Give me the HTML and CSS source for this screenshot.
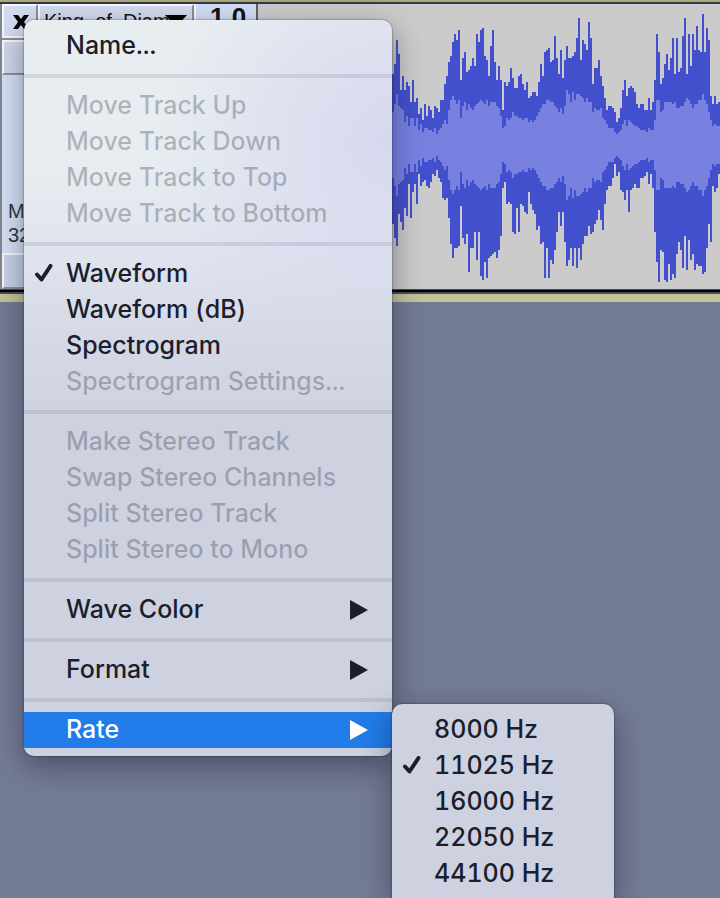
FILE: index.html
```html
<!DOCTYPE html>
<html lang="en">
<head>
<meta charset="utf-8">
<title>Audio track menu</title>
<link rel="stylesheet" href="styles.css">
</head>
<body>
<main class="workspace">
  <section class="track">
    <div class="panel">
      <div class="panel-head">
        <button class="close" aria-label="Close track"><svg width="16" height="14" viewBox="0 0 16 14"><path d="M0 0h5l3 4 3-4h5l-5 7 5 7h-5l-3-4-3 4H0l5-7z"/></svg></button>
        <button class="title"><span>King_of_Diam</span><svg width="22" height="12" viewBox="0 0 22 12"><path d="M0 0h22L11 12z"/></svg></button>
      </div>
      <div class="panel-bar"></div>
      <div class="panel-info"><span>Mono</span><span>32-bit</span></div>
      <div class="panel-foot"></div>
    </div>
    <div class="ruler">1.0</div>
    <svg class="wave" viewBox="0 0 1386 855" preserveAspectRatio="none" aria-hidden="true">
      <path class="peak" id="peak"/>
      <path class="rms" id="rms"/>
    </svg>
  </section>

  <nav class="menu track-menu" aria-label="Track">
    <button class="item">Name...</button>
    <hr>
    <button class="item" disabled>Move Track Up</button>
    <button class="item" disabled>Move Track Down</button>
    <button class="item" disabled>Move Track to Top</button>
    <button class="item" disabled>Move Track to Bottom</button>
    <hr>
    <button class="item"><svg class="check" viewBox="0 0 18 18"><path d="M2 10.500L6.500 15.500 15.500 2"/></svg>Waveform</button>
    <button class="item">Waveform (dB)</button>
    <button class="item">Spectrogram</button>
    <button class="item" disabled>Spectrogram Settings...</button>
    <hr>
    <button class="item" disabled>Make Stereo Track</button>
    <button class="item" disabled>Swap Stereo Channels</button>
    <button class="item" disabled>Split Stereo Track</button>
    <button class="item" disabled>Split Stereo to Mono</button>
    <hr>
    <button class="item">Wave Color<svg class="arrow" viewBox="0 0 18 20"><path d="M0 0l18 10L0 20z"/></svg></button>
    <hr>
    <button class="item">Format<svg class="arrow" viewBox="0 0 18 20"><path d="M0 0l18 10L0 20z"/></svg></button>
    <hr>
    <button class="item active">Rate<svg class="arrow" viewBox="0 0 18 20"><path d="M0 0l18 10L0 20z"/></svg></button>
  </nav>

  <nav class="menu rate-menu" aria-label="Rate">
    <button class="item">8000 Hz</button>
    <button class="item"><svg class="check" viewBox="0 0 18 18"><path d="M2 10.500L6.500 15.500 15.500 2"/></svg>11025 Hz</button>
    <button class="item">16000 Hz</button>
    <button class="item">22050 Hz</button>
    <button class="item">44100 Hz</button>
  </nav>
</main>
<script src="wave.js"></script>
</body>
</html>
```
FILE: styles.css
```css
* { box-sizing: border-box; }
body {
  margin: 0;
  background: #747b95;
  overflow: hidden;
  font-family: Inter, "Liberation Sans", sans-serif;
}
button {
  margin: 0;
  padding: 0;
  border: 0;
  background: none;
  color: inherit;
  font: inherit;
  text-align: left;
}
.workspace { position: relative; min-height: 100vh; }

.track {
  display: flex;
  height: 302px;
  border-top: 2px solid #aaa878;
  border-bottom: 8px solid #c4c397;
  background: #464a5c;
  box-shadow: inset 0 -2px #464a5c, inset 0 -4px #000, inset 0 2px #34384a;
  padding: 2px 0 5px;
  font-family: "Liberation Sans", sans-serif;
  color: #111;
}
.panel {
  display: flex;
  flex-direction: column;
  width: 194px;
  border-left: 2px solid #84878f;
  background: #d6e2f8;
}
.panel-head { display: flex; height: 36px; border-bottom: 2px solid #8e8e92; }
.close, .title { border: 2px solid #f5f8fd; border-right: 2px solid #8e8e92; background: #d3dbee; }
.close { display: flex; align-items: flex-start; width: 36px; padding: 9px 0 0 9px; }
.title { flex: 1; display: flex; align-items: flex-start; padding: 3px 5px 0 4px; font-size: 20px; line-height: 24px; }
.title span { flex: 1; width: 0; white-space: nowrap; }
.title svg { margin-top: 6px; }
.panel-bar { height: 35px; border: 2px solid #f5f8fd; border-bottom: 2px solid #8e8e92; background: #d0d8ea; }
.panel-info {
  flex: 1;
  display: flex;
  flex-direction: column;
  justify-content: flex-end;
  padding: 0 6px 6px;
  font-size: 20px;
  line-height: 24px;
  color: #333;
}
.panel-foot { height: 36px; border: 2px solid #f8faf8; border-bottom: 2px solid #8e8e92; background: #c9d2e6; }
.ruler {
  width: 64px;
  padding-left: 14px;
  border-right: 2px solid #5c5f6c;
  border-left: 2px solid #f5f8fd;
  background: #d3def5;
  font-size: 26px;
  line-height: 26px;
  font-weight: 700;
}
.wave { flex: 1; width: 0; height: 100%; background: #cbcbcb; }
.peak { fill: #4350ce; }
.rms { fill: #7981e0; }

.menu {
  position: absolute;
  padding: 8px 0;
  border-radius: 10px;
  background: #ced1e0;
  color: #1b1e2c;
  font-size: 25px;
  font-weight: 500;
  font-variant-numeric: tabular-nums;
  line-height: 36px;
  overflow: hidden;
}
.track-menu {
  top: 20px;
  left: 24px;
  width: 368px;
  background:
    radial-gradient(ellipse 240px 230px at 100% 120px, rgba(213, 215, 238, .95), rgba(214, 216, 240, 0)),
    linear-gradient(#e8eef0 0, #e7ecf0 150px, #e0e4ee 230px, #d5d9e5 320px, #ced1e0 410px);
  box-shadow: 0 0 2px rgba(0, 0, 0, .6), 0 10px 30px rgba(20, 22, 40, .45);
}
.rate-menu {
  top: 704px;
  left: 392px;
  width: 222px;
  border-radius: 10px 10px 0 0;
  box-shadow: 0 0 2px rgba(0, 0, 0, .6), 0 10px 30px rgba(20, 22, 40, .45);
}
.item {
  display: flex;
  align-items: center;
  position: relative;
  width: 100%;
  height: 36px;
  padding: 0 24px 2px 42px;
  white-space: nowrap;
}
.item:disabled { color: rgba(27, 30, 44, .28); }
.item.active { background: #217ce9; color: #fff; }
.menu hr { height: 4px; margin: 10px 0; border: 0; background: rgba(60, 65, 95, .12); }
.check {
  position: absolute;
  left: 11px;
  top: 8px;
  width: 18px;
  height: 18px;
  fill: none;
  stroke: currentColor;
  stroke-width: 4;
  stroke-linecap: round;
  stroke-linejoin: round;
}
.arrow { width: 18px; height: 20px; margin: 2px 0 0 auto; fill: currentColor; }
```
FILE: wave.js
```js
// Sample levels in thirds of a pixel, one entry per two-pixel column.
const high = [222,192,120,162,270,228,270,246,258,306,240,306,294,342,324,360,312,348,318,330,354,318,324,336,300,300,252,228,186,168,126,102,120,90,240,174,156,216,210,198,174,198,102,126,90,84,168,180,228,138,90,186,240,198,240,330,246,258,246,204,234,264,264,228,222,252,270,246,294,288,276,276,288,246,192,228,156,150,144,186,180,108,
174,222,150,234,180,138,174,174,168,156,114,54,180,120,132,150,66,114,252,204,204,180,228,258,294,330,318,318,324,336,366,354,324,270,240,288,264,258,264,276,312,324,312,312,330,330,294,330,306,240,102,156,252,234,192,162,210,174,114,222,114,216,204,108,54,222,102,198,102,150,78,150,156,42,156,84,120,288,312,288,312,306];
const low = [222,264,288,192,216,240,174,198,102,204,126,102,162,72,108,96,90,108,114,96,72,78,60,84,96,144,150,144,204,282,324,294,294,288,168,264,282,252,366,294,294,246,330,246,378,390,336,384,324,318,312,306,324,300,258,114,96,162,156,162,246,252,174,246,162,168,186,192,126,162,180,192,240,228,282,276,384,294,384,330,342,300,
246,186,228,186,276,348,330,294,348,294,354,294,330,282,258,258,228,252,246,222,210,180,210,240,162,120,108,108,84,42,78,66,120,126,150,120,186,120,114,102,114,114,84,84,78,66,102,72,114,246,336,396,300,306,390,396,342,390,372,384,312,276,300,354,258,360,270,330,312,360,342,348,348,372,366,294,222,276,108,126,114,72];
const mean = [336,312,282,318,324,330,366,348,378,354,354,378,354,390,372,396,384,384,390,390,396,384,402,390,384,372,360,372,330,300,288,300,312,300,354,318,306,330,312,324,330,318,312,306,300,306,312,300,318,306,306,306,318,324,348,384,378,354,360,354,336,348,348,354,354,360,354,354,366,360,366,360,348,336,324,312,312,300,300,306,306,318,
324,336,324,342,318,270,282,306,276,300,282,282,288,294,306,294,306,306,336,324,330,330,324,354,360,372,384,384,384,396,402,396,390,372,360,378,360,366,372,378,378,384,390,390,390,396,384,390,390,360,300,300,336,330,306,306,306,306,312,306,324,324,318,318,306,294,300,312,324,312,312,300,300,282,300,312,336,360,378,372,378,378];

const START = 402;
const TOP = 12;
const bars = (top, bottom) => top
  .map((y, i) => `M${START + i * 6} ${y - TOP}h6V${bottom[i] - TOP}h-6z`)
  .join("");

document.getElementById("peak").setAttribute("d", bars(high, low.map(y => y + 450)));
document.getElementById("rms").setAttribute("d", bars(mean, mean.map(y => 870 - y)));
```
